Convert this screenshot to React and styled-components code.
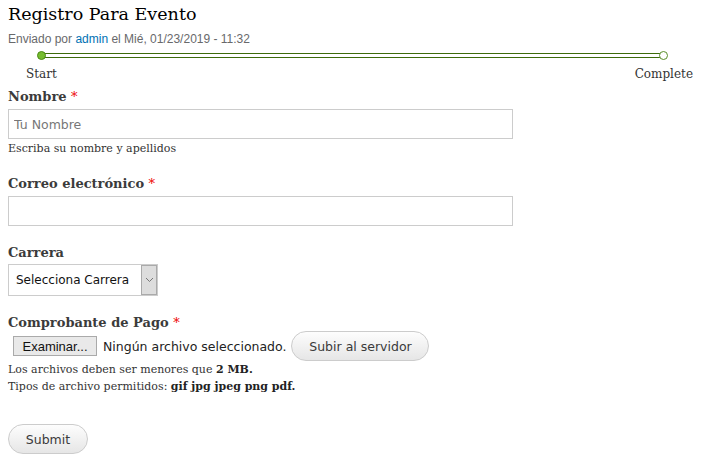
import React from 'react'
import styled, { createGlobalStyle } from 'styled-components'

const GlobalStyle = createGlobalStyle`
  html, body {
    overflow: hidden;
  }
  body {
    margin: 0;
    background: #fff;
    font-family: "DejaVu Serif", Georgia, serif;
  }
`

function App() {
    return (
        <>
            <GlobalStyle />
            <Page>
                <Title>Registro Para Evento</Title>
                <Meta>
                    Enviado por <MetaLink href="#">admin</MetaLink> el Mié, 01/23/2019 - 11:32
                </Meta>

                <Progress>
                    <Track>
                        <Dot />
                        <Dot end />
                    </Track>
                    <Steps>
                        <Step>Start</Step>
                        <Step>Complete</Step>
                    </Steps>
                </Progress>

                <form onSubmit={e => e.preventDefault()}>
                    <Item>
                        <Label htmlFor="nombre">Nombre <Req>*</Req></Label>
                        <TextInput id="nombre" type="text" placeholder="Tu Nombre" />
                        <Description>Escriba su nombre y apellidos</Description>
                    </Item>

                    <Item>
                        <Label htmlFor="correo">Correo electrónico <Req>*</Req></Label>
                        <TextInput id="correo" type="email" />
                    </Item>

                    <Item>
                        <Label htmlFor="carrera">Carrera</Label>
                        <SelectWrap>
                            <Select id="carrera" defaultValue="">
                                <option value="">Selecciona Carrera</option>
                            </Select>
                            <Arrow>
                                <svg width="9" height="6" viewBox="0 0 9 6">
                                    <path d="M1 1 L4.5 4.5 L8 1" fill="none" stroke="#777" strokeWidth="1" />
                                </svg>
                            </Arrow>
                        </SelectWrap>
                    </Item>

                    <Item>
                        <Label>Comprobante de Pago <Req>*</Req></Label>
                        <FileRow>
                            <Browse type="button">Examinar...</Browse>
                            <FileName>Ningún archivo seleccionado.</FileName>
                            <Button type="button">Subir al servidor</Button>
                        </FileRow>
                        <Description tight>
                            Los archivos deben ser menores que <strong>2 MB.</strong>
                        </Description>
                        <Description tight>
                            Tipos de archivo permitidos: <strong>gif jpg jpeg png pdf.</strong>
                        </Description>
                    </Item>

                    <Actions>
                        <Button type="submit" small>Submit</Button>
                    </Actions>
                </form>
            </Page>
        </>
    )
}

export default App

const Page = styled.div`
    padding: 5px 8px 0 8px;
`
const Title = styled.h1`
    margin: 0;
    font-family: "DejaVu Serif", Georgia, serif;
    font-weight: normal;
    font-size: 17.5px;
    line-height: 18px;
    color: #000;
`
const Meta = styled.div`
    margin-top: 8px;
    font-family: "Liberation Sans", Arial, sans-serif;
    font-size: 12px;
    line-height: 16px;
    color: #68696b;
`
const MetaLink = styled.a`
    color: #0071b3;
    text-decoration: none;
`
const Progress = styled.div`
    margin-top: 6px;
`
const Track = styled.div`
    position: relative;
    margin: 0 33px 0 34px;
    height: 5px;
    box-sizing: border-box;
    border-top: 1px solid #3d6b0b;
    border-bottom: 1px solid #3d6b0b;
`
const Dot = styled.span`
    position: absolute;
    top: -3px;
    ${p => (p.end ? 'right: -5px;' : 'left: -5px;')}
    width: 9px;
    height: 9px;
    box-sizing: border-box;
    border-radius: 50%;
    border: 1px solid ${p => (p.end ? '#5a8f2a' : '#4c8a16')};
    background: ${p => (p.end ? '#fff' : '#76bd2e')};
`
const Steps = styled.div`
    display: flex;
    justify-content: space-between;
    margin: 8px 3px 0 18px;
`
const Step = styled.span`
    font-size: 12px;
    line-height: 16px;
    color: #333;
`
const Item = styled.div`
    margin-top: 6px;
    margin-bottom: 18px;
`
const Label = styled.label`
    display: block;
    font-family: "DejaVu Serif", Georgia, serif;
    font-weight: bold;
    font-size: 13px;
    line-height: 18px;
    color: #3b3b3b;
    margin-bottom: 3px;
`
const Req = styled.span`
    color: #e00;
    font-weight: normal;
`
const TextInput = styled.input`
    display: block;
    width: 505px;
    height: 30px;
    box-sizing: border-box;
    margin: 0;
    padding: 4px 5px;
    border: 1px solid #ccc;
    font-family: "DejaVu Sans", Verdana, sans-serif;
    font-size: 12.5px;
    color: #333;
    outline: none;
    &::placeholder {
        color: #777;
    }
`
const Description = styled.div`
    margin-top: ${p => (p.tight ? '0' : '2px')};
    font-family: "DejaVu Serif", Georgia, serif;
    font-size: 11px;
    line-height: ${p => (p.tight ? '17px' : '16px')};
    color: #333;
    strong {
        color: #222;
    }
`
const SelectWrap = styled.div`
    position: relative;
    width: 150px;
    height: 32px;
    margin-top: -1px;
`
const Select = styled.select`
    appearance: none;
    width: 100%;
    height: 100%;
    margin: 0;
    padding: 0 20px 0 7px;
    border: 1px solid #ccc;
    border-radius: 0;
    background: #fff;
    font-family: "DejaVu Sans", Verdana, sans-serif;
    font-size: 12px;
    color: #111;
    outline: none;
`
const Arrow = styled.span`
    position: absolute;
    top: 1px;
    right: 1px;
    bottom: 1px;
    width: 16px;
    box-sizing: border-box;
    border: 1px solid #aaa;
    background: #ddd;
    display: flex;
    align-items: center;
    justify-content: center;
    pointer-events: none;
`
const FileRow = styled.div`
    display: flex;
    align-items: center;
    height: 30px;
    padding-left: 5px;
    margin-top: -4px;
`
const Browse = styled.button`
    height: 20px;
    width: 84px;
    margin: 0;
    padding: 0;
    border: 1px solid #aaa;
    border-radius: 0;
    background: #e9e9e9;
    font-family: "Liberation Sans", Arial, sans-serif;
    font-size: 13px;
    color: #111;
`
const FileName = styled.span`
    margin: 0 5px 0 6px;
    font-family: "DejaVu Sans", Verdana, sans-serif;
    font-size: 12.5px;
    color: #222;
`
const Button = styled.button`
    height: 30px;
    padding: 0 16px;
    min-width: ${p => (p.small ? '80px' : '138px')};
    box-sizing: border-box;
    border: 1px solid #ccc;
    border-radius: 15px;
    background: linear-gradient(#fdfdfd, #e6e6e6);
    font-family: "DejaVu Sans", Verdana, sans-serif;
    font-size: 12.5px;
    color: #3a3a3a;
    cursor: pointer;
`
const Actions = styled.div`
    display: flex;
    margin-top: 29px;
`
